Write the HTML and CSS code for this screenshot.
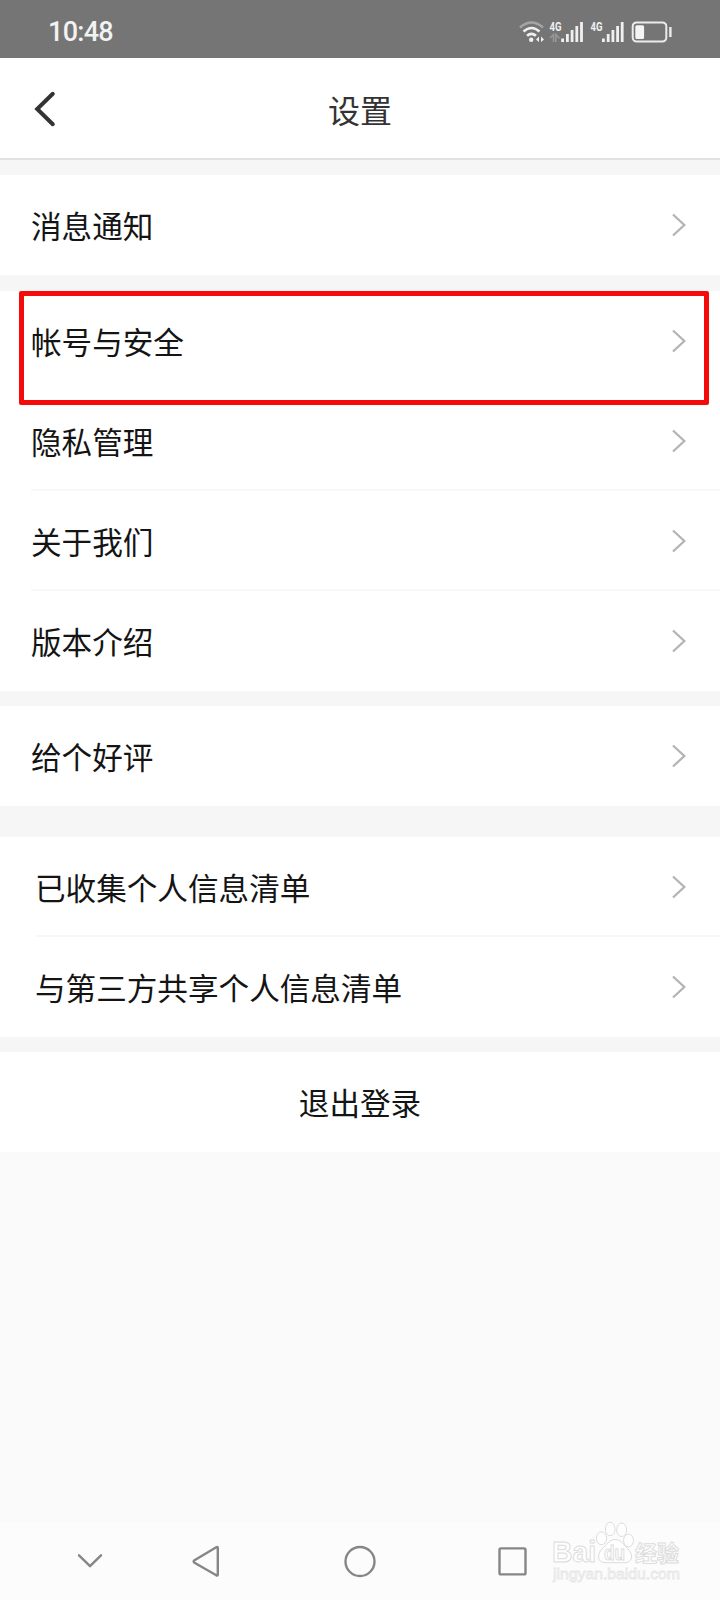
FILE: index.html
```
<!DOCTYPE html>
<html lang="zh-CN">
<head>
    <meta charset="UTF-8">
    <meta name="viewport" content="width=device-width, initial-scale=1.0">
    <title>设置</title>
    <link rel="stylesheet" href="styles.css">
</head>
<body>
    <svg class="symbols" width="0" height="0">
        <symbol id="arrow" viewBox="0 0 16 26">
            <path d="M2 2.500L13.300 13L2 23.500" fill="none" stroke="#b4b4b8" stroke-width="2.300"/>
        </symbol>
    </svg>
    <div class="status-bar">
        <span class="clock">10:48</span>
        <svg class="status-icons" width="156" height="26" viewBox="518 18 156 26">
            <!-- wifi -->
            <g fill="none" stroke-width="2.6">
                <path d="M520 26.5Q531.5 16.500 543 26.500" stroke="#a5a5a5"/>
                <path d="M523.500 30.500Q531.500 23.500 539.500 30.500M527 34.800Q531.500 31 536 34.800" stroke="#f0f0f0"/>
            </g>
            <circle cx="531.200" cy="38.800" r="2.200" fill="#f0f0f0"/>
            <path d="M536 38.500L539 35.500V41zM541 35.500L544 38.500L541 41z" fill="#f0f0f0"/>
            <!-- signal -->
            <text class="net" x="549.500" y="29.500" textLength="12" lengthAdjust="spacingAndGlyphs">4G</text>
            <path d="M550 37L553.500 33.500V41M555.800 41V33.500L559.500 37.500" fill="none" stroke="#999" stroke-width="1.500"/>
            <path d="M562.600 37.500V41M567.400 33V41M572.100 29V41M576.800 25V41M581.500 21V41" class="bars"/>
            <text class="net" x="590.500" y="29.500" textLength="12" lengthAdjust="spacingAndGlyphs">4G</text>
            <path d="M603.400 37.500V41M608.200 33V41M612.900 29V41M617.600 25V41M622.200 21V41" class="bars"/>
            <!-- battery -->
            <rect x="632.700" y="21.400" width="33.600" height="19.200" rx="4" fill="none" stroke="#ececec" stroke-width="2"/>
            <rect x="635.300" y="24.300" width="8.800" height="13.600" rx="1.500" fill="#f4f4f4"/>
            <path d="M670.400 26V36" stroke="#ececec" stroke-width="2.400"/>
        </svg>
    </div>
    <div class="header">
        <svg class="back" width="22" height="38" viewBox="0 0 22 38">
            <path d="M18.800 3.800L3.200 19L18.800 34.200" fill="none" stroke="#333" stroke-width="4" stroke-linecap="round"/>
        </svg>
        <h1>设置</h1>
    </div>
    <div class="settings">
        <div class="group">
            <div class="row"><span>消息通知</span><svg class="arrow"><use href="#arrow"/></svg></div>
        </div>
        <div class="group">
            <div class="row no-line"><span>帐号与安全</span><svg class="arrow"><use href="#arrow"/></svg><div class="highlight"></div></div>
            <div class="row"><span>隐私管理</span><svg class="arrow"><use href="#arrow"/></svg></div>
            <div class="row"><span>关于我们</span><svg class="arrow"><use href="#arrow"/></svg></div>
            <div class="row"><span>版本介绍</span><svg class="arrow"><use href="#arrow"/></svg></div>
        </div>
        <div class="group">
            <div class="row"><span>给个好评</span><svg class="arrow"><use href="#arrow"/></svg></div>
        </div>
        <div class="group privacy">
            <div class="row"><span>已收集个人信息清单</span><svg class="arrow"><use href="#arrow"/></svg></div>
            <div class="row"><span>与第三方共享个人信息清单</span><svg class="arrow"><use href="#arrow"/></svg></div>
        </div>
        <div class="group">
            <div class="row logout"><span>退出登录</span></div>
        </div>
    </div>
    <div class="nav-bar">
        <svg width="720" height="77" viewBox="0 1523 720 77" fill="none" stroke="#868686" stroke-width="2.400" stroke-linecap="round" stroke-linejoin="round">
            <path d="M79 1555.300L90 1566.200L101 1555.300"/>
            <path d="M216.300 1547.300Q217.800 1546.500 217.800 1548V1574.500Q217.800 1576 216.300 1575.300L194.500 1562.800Q192.800 1561.500 194.500 1560.200Z"/>
            <circle cx="360" cy="1561.500" r="14.500"/>
            <rect x="499.500" y="1548.400" width="26" height="26" rx="1.500"/>
        </svg>
    </div>
    <div class="watermark">
        <svg width="136" height="66" viewBox="550 1518 136 66" fill="#fefefe" stroke="#dcdcdc" stroke-width="1">
            <text class="brand" x="552" y="1562" textLength="44" lengthAdjust="spacingAndGlyphs">Bai</text>
            <ellipse cx="601.500" cy="1538.300" rx="5.200" ry="6.500"/>
            <ellipse cx="610.200" cy="1529" rx="4.800" ry="6.700"/>
            <ellipse cx="621.700" cy="1529.800" rx="5" ry="6.700"/>
            <ellipse cx="628.500" cy="1540.500" rx="5" ry="6.300"/>
            <path d="M615 1539.500C621 1539.500 624 1545 628 1549C634 1555 632 1562.700 625 1562.700H605C597 1562.700 597 1554 602 1549C607 1545 609 1539.500 615 1539.500Z"/>
            <text class="du" x="604" y="1560" textLength="21" lengthAdjust="spacingAndGlyphs">du</text>
            <text class="cn" x="635" y="1561" textLength="44" lengthAdjust="spacingAndGlyphs">经验</text>
            <text class="url" x="553" y="1579" textLength="127" lengthAdjust="spacingAndGlyphs">jingyan.baidu.com</text>
        </svg>
    </div>
</body>
</html>
```
FILE: styles.css
```
* {
    box-sizing: border-box;
}
body {
    margin: 0;
    height: 1600px;
    display: flex;
    flex-direction: column;
    background-color: #fafafa;
    font-family: "Noto Sans CJK SC", sans-serif;
    color: #141414;
    position: relative;
    overflow: hidden;
}
svg {
    display: block;
    flex-shrink: 0;
}
.symbols {
    position: absolute;
}
.status-bar {
    height: 58px;
    background-color: #757575;
    display: flex;
    align-items: center;
    justify-content: space-between;
    padding: 5px 46px 0 48px;
}
.clock {
    font-family: Roboto, sans-serif;
    font-size: 27px;
    font-weight: 500;
    letter-spacing: -0.7px;
    line-height: 30px;
    padding-top: 1px;
    color: #f2f2f2;
}
.net {
    font-family: Roboto, sans-serif;
    font-size: 12px;
    font-weight: 700;
    fill: #f0f0f0;
}
.bars {
    stroke: #f0f0f0;
    stroke-width: 2.8;
}
.header {
    height: 102px;
    background-color: #fff;
    border-bottom: 2px solid #e2e2e2;
    display: grid;
    grid-template-columns: 60px 1fr 60px;
    align-items: center;
    padding: 1px 33px 0;
}
.back {
    margin: 1px 0 0 1px;
}
h1 {
    margin: 0;
    font-size: 32px;
    font-weight: 400;
    line-height: 48px;
    text-align: center;
    color: #333;
}
.settings {
    background-color: #f6f6f6;
    display: flex;
    flex-direction: column;
    gap: 15px;
    padding-top: 15px;
}
.group {
    background-color: #fff;
    padding-left: 31px;
}
.group:nth-child(2) {
    margin-top: 1px;
}
.privacy {
    margin-top: 16px;
    padding-left: 35px;
}
.row {
    height: 100px;
    display: flex;
    align-items: center;
    justify-content: space-between;
    padding: 2px 33px 0 0;
    border-bottom: 2px solid #f8f8f8;
    font-size: 30.6px;
    line-height: 46px;
    position: relative;
}
.row:last-child, .no-line {
    border-bottom-color: transparent;
}
.arrow {
    width: 16px;
    height: 26px;
}
.highlight {
    position: absolute;
    top: 0;
    left: -12px;
    width: 690px;
    height: 114px;
    border: 5px solid #f60b0b;
    border-radius: 2px;
    z-index: 1;
}
.logout {
    justify-content: center;
    padding-right: 31px;
}
.nav-bar {
    margin-top: auto;
    height: 77px;
    background-color: #fcfcfc;
}
.watermark {
    position: absolute;
    left: 550px;
    top: 1518px;
}
.brand, .du {
    font-family: "Liberation Sans", sans-serif;
    font-weight: 700;
    font-size: 30px;
}
.du {
    font-size: 20px;
}
.cn {
    font-weight: 700;
    font-size: 22px;
}
.url {
    font-family: "Liberation Sans", sans-serif;
    font-size: 15px;
    stroke: #e6e6e6;
    stroke-width: 0.8;
}
```
